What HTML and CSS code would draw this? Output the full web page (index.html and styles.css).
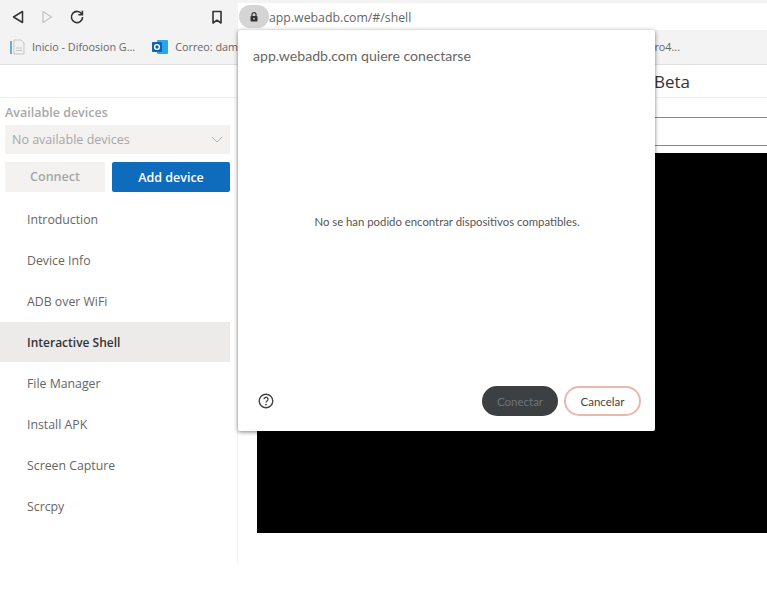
FILE: index.html
```html
<!DOCTYPE html>
<html lang="en">
<head>
  <meta charset="UTF-8">
  <meta name="viewport" content="width=device-width, initial-scale=1.0">
  <title>WebADB</title>
  <link rel="stylesheet" href="styles.css">
</head>
<body>

  <div class="toolbar">
    <div class="nav-buttons">
      <svg class="icon" viewBox="0 0 16 16"><path d="M13.5 2.5v11L4.5 8z" fill="none" stroke="#333" stroke-width="1.5" stroke-linejoin="round"/></svg>
      <svg class="icon" viewBox="0 0 16 16"><path d="M4 2.5v11L12.5 8z" fill="none" stroke="#c4c4c4" stroke-width="1.3" stroke-linejoin="round"/></svg>
      <svg class="icon" viewBox="0 0 16 16"><path d="M13 5.5A5.6 5.6 0 1 0 13.6 8M13.4 1.8v4h-4" fill="none" stroke="#333" stroke-width="1.6"/></svg>
      <svg class="icon bookmark" viewBox="0 0 16 16"><path d="M4 2.5h8v11.5L8 11.2 4 14z" fill="none" stroke="#333" stroke-width="1.6" stroke-linejoin="round"/></svg>
    </div>
    <div class="address">
      <span class="lock">
        <svg viewBox="0 0 12 12" width="12" height="12"><path d="M4 5V3.6a2 2 0 0 1 4 0V5" fill="none" stroke="#333" stroke-width="1.2"/><rect x="2.5" y="5" width="7" height="5.5" rx="1" fill="#333"/><circle cx="6" cy="7.7" r="0.9" fill="#ccc"/></svg>
      </span>
      <span class="url">app.webadb.com/#/shell</span>
    </div>
  </div>

  <div class="bookmarks">
    <span class="bookmark-item item-first">
      <svg width="16" height="16" viewBox="0 0 16 16"><rect x="0" y="2" width="2" height="13" fill="#6fa8d6"/><path d="M4 1h7l3 3v11H4z" fill="#f2f2f2" stroke="#c5c5c5"/><path d="M6 9h6M6 11.5h6" stroke="#c5c5c5"/></svg>
      Inicio - Difoosion G...
    </span>
    <span class="bookmark-item item-mail">
      <svg width="16" height="16" viewBox="0 0 16 16"><rect x="5" y="1" width="11" height="14" rx="1" fill="#28a8ea"/><rect x="0" y="3" width="10" height="10" rx="1" fill="#0f63b0"/><circle cx="5" cy="8" r="2.4" fill="none" stroke="#fff" stroke-width="1.4"/></svg>
      Correo: dam
    </span>
    <span class="bookmark-end">ro4...</span>
  </div>

  <div class="app">
    <aside class="sidebar">
      <div class="sidebar-head"></div>
      <div class="devices">
        <div class="devices-label">Available devices</div>
        <div class="devices-select">
          <span>No available devices</span>
          <svg width="12" height="7" viewBox="0 0 12 7"><path d="M1 1l5 5 5-5" fill="none" stroke="#b5b5b5"/></svg>
        </div>
        <div class="devices-buttons">
          <button class="btn-connect">Connect</button>
          <button class="btn-add">Add device</button>
        </div>
      </div>
      <nav class="menu">
        <a>Introduction</a>
        <a>Device Info</a>
        <a>ADB over WiFi</a>
        <a class="active">Interactive Shell</a>
        <a>File Manager</a>
        <a>Install APK</a>
        <a>Screen Capture</a>
        <a>Scrcpy</a>
      </nav>
    </aside>

    <main class="content">
      <div class="content-head">Beta</div>
      <div class="tab-lines"></div>
      <div class="terminal"></div>
    </main>
  </div>

  <div class="dialog">
    <div class="dialog-title">app.webadb.com quiere conectarse</div>
    <div class="dialog-body">No se han podido encontrar dispositivos compatibles.</div>
    <div class="dialog-foot">
      <svg width="16" height="16" viewBox="0 0 16 16"><circle cx="8" cy="8" r="6.8" fill="none" stroke="#444" stroke-width="1.4"/><path d="M6 6.3a2 2 0 1 1 3 1.7c-.7.4-1 .8-1 1.6" fill="none" stroke="#444" stroke-width="1.3"/><circle cx="8" cy="11.6" r="0.9" fill="#444"/></svg>
      <div class="dialog-buttons">
        <button class="btn-accept">Conectar</button>
        <button class="btn-cancel">Cancelar</button>
      </div>
    </div>
  </div>

</body>
</html>
```

FILE: styles.css
```css
html, body {
  height: 600px;
  overflow: hidden;
}
body {
  margin: 0;
  position: relative;
  font-family: "Open Sans", "Noto Sans", sans-serif;
  background-color: #fff;
  color: #555;
}
button {
  font-family: inherit;
  border: none;
  cursor: pointer;
}

/* browser bars */
.toolbar {
  height: 30px;
  display: flex;
  align-items: center;
  background: linear-gradient(#f3f3f3 3px, #fff 3px);
}
.icon {
  width: 16px;
  height: 16px;
  flex: none;
}
.nav-buttons {
  box-sizing: border-box;
  width: 238px;
  height: 30px;
  padding: 3px 0 0 9px;
  display: flex;
  gap: 14px;
  align-items: center;
  background-color: #f3f3f3;
  flex: none;
}
.nav-buttons .bookmark {
  margin-left: 110px;
}
.address {
  display: flex;
  align-items: center;
  margin-left: 1px;
  margin-top: 3px;
}
.lock {
  width: 30px;
  height: 23px;
  border-radius: 12px;
  background-color: #d4d4d4;
  display: flex;
  align-items: center;
  justify-content: center;
}
.url {
  font-size: 12.3px;
  line-height: 17px;
  padding-top: 2px;
  color: #666;
}
.bookmarks {
  height: 33px;
  padding-bottom: 1px;
  background-color: #f3f3f3;
  border-bottom: 1px solid #dedede;
  display: flex;
  align-items: center;
  font-size: 10.8px;
  color: #666;
}
.bookmark-item {
  display: flex;
  align-items: center;
  gap: 6px;
  white-space: nowrap;
}
.item-first {
  margin-left: 10px;
}
.item-mail {
  margin-left: 17px;
  gap: 7px;
}
.bookmark-end {
  margin-left: auto;
  margin-right: 87px;
}

/* app */
.app {
  display: flex;
  height: 499px;
}
.sidebar {
  width: 238px;
  flex: none;
  box-sizing: border-box;
  border-right: 1px solid #f2f2f2;
}
.sidebar-head {
  height: 32px;
  border-bottom: 1px solid #f0f0f0;
}
.devices {
  padding: 6px 7px 0 5px;
}
.devices-label {
  font-size: 12.5px;
  font-weight: 600;
  color: #a8a8a8;
  line-height: 17px;
}
.devices-select {
  margin-top: 4px;
  height: 29px;
  background-color: #f3f2f1;
  display: flex;
  align-items: center;
  justify-content: space-between;
  padding: 0 7px;
  font-size: 12.5px;
  color: #a6a6a6;
}
.devices-buttons {
  margin-top: 8px;
  display: flex;
  gap: 7px;
}
.btn-connect, .btn-add {
  height: 30px;
  font-size: 12.5px;
  font-weight: 600;
}
.btn-connect {
  width: 100px;
  padding-bottom: 2px;
  background-color: #f3f2f1;
  color: #a6a6a6;
}
.btn-add {
  width: 118px;
  background-color: #0f6cbd;
  color: #fff;
  border-radius: 2px;
}
.menu {
  margin-top: 7px;
  margin-right: 7px;
  display: flex;
  flex-direction: column;
  gap: 1px;
}
.menu a {
  height: 40px;
  line-height: 42px;
  padding-left: 27px;
  font-size: 12.3px;
  color: #666;
}
.menu .active {
  background-color: #edebe9;
  color: #333;
  font-size: 12px;
  font-weight: 600;
}

.content {
  flex: 1;
  min-width: 0;
}
.content-head {
  height: 32px;
  line-height: 34px;
  padding-left: 416px;
  font-size: 17px;
  color: #333;
  border-bottom: 1px solid #f0f0f0;
}
.tab-lines {
  margin-top: 19px;
  height: 27px;
  border-top: 1px solid #888;
  border-bottom: 1px solid #888;
}
.terminal {
  margin-top: 7px;
  margin-left: 19px;
  height: 380px;
  background-color: #000;
}

/* permission dialog */
.dialog {
  position: absolute;
  left: 238px;
  top: 30px;
  width: 417px;
  height: 401px;
  box-sizing: border-box;
  background-color: #fff;
  border-radius: 2px;
  box-shadow: 0 1px 4px rgba(0, 0, 0, 0.5);
  padding: 17px 14px 15px 15px;
  display: flex;
  flex-direction: column;
  font-family: Lato, "Open Sans", sans-serif;
}
.dialog-title {
  font-size: 14.1px;
  line-height: 18px;
  color: #666;
}
.dialog-body {
  margin-top: 150px;
  font-size: 11.35px;
  line-height: 14px;
  text-align: center;
  color: #555;
}
.dialog-foot {
  margin-top: auto;
  display: flex;
  align-items: center;
  justify-content: space-between;
  padding-left: 5px;
}
.dialog-buttons {
  display: flex;
  gap: 6px;
}
.btn-accept, .btn-cancel {
  height: 30px;
  border-radius: 15px;
  font-size: 11.5px;
  font-family: inherit;
}
.btn-accept {
  width: 76px;
  background-color: #3c4043;
  color: #6f7478;
}
.btn-cancel {
  width: 77px;
  background-color: #fff;
  color: #444;
  border: 2px solid #e8b9ac;
}
```
